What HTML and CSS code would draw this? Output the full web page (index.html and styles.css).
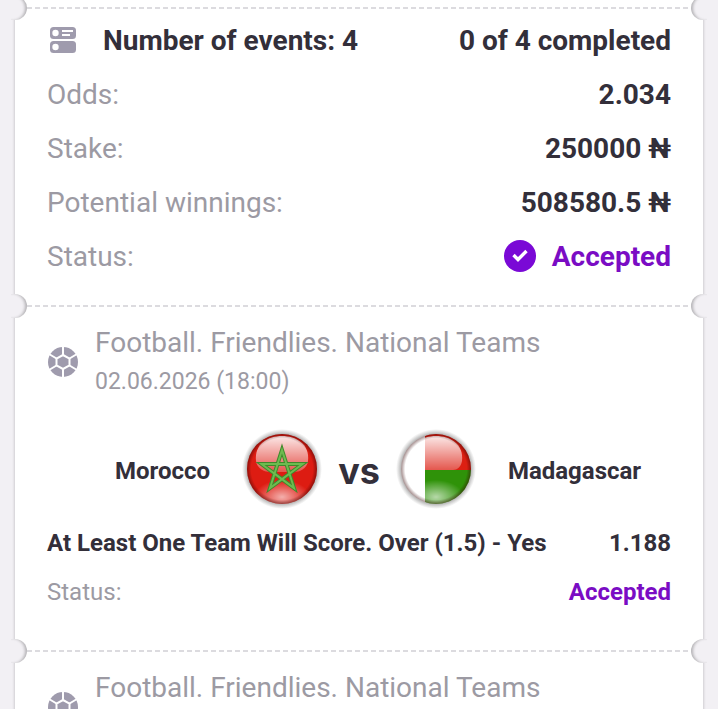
FILE: index.html
```
<!DOCTYPE html>
<html lang="en">
<head>
    <meta charset="UTF-8">
    <meta name="viewport" content="width=device-width, initial-scale=1.0">
    <title>Bet slip</title>
    <link rel="stylesheet" href="styles.css">
</head>
<body>
    <!-- Shared icons -->
    <svg class="sprite" aria-hidden="true">
        <symbol id="ball" viewBox="0 0 32 32">
            <circle cx="16" cy="16" r="15" fill="#9f9bad"/>
            <g fill="none" stroke="#fff" stroke-width="2">
                <path d="M16 9l6.500 3.500v7L16 23l-6.500-3.500v-7z"/>
                <path d="M16 0v9M16 23v9M22.500 12.500L30 8M22.500 19.500L30 24M9.500 12.500L2 8M9.500 19.500L2 24"/>
            </g>
        </symbol>
    </svg>

    <main class="ticket">
        <div class="divider"></div>

        <section class="summary">
            <div class="row">
                <svg class="icon" viewBox="0 0 32 32" aria-hidden="true">
                    <rect x="3" y="3" width="26" height="12" rx="3.500" fill="#9f9bad"/>
                    <rect x="3" y="17" width="26" height="12" rx="3.500" fill="#9f9bad"/>
                    <circle cx="8.500" cy="9" r="3.200" fill="#fff"/>
                    <circle cx="8.500" cy="23" r="3.200" fill="#fff"/>
                    <path d="M15 7h11M15 11h8" stroke="#fff" stroke-width="2.200"/>
                </svg>
                <span class="count">Number of events: 4</span>
                <span class="value">0 of 4 completed</span>
            </div>
            <div class="row">
                <span class="name">Odds:</span>
                <span class="value">2.034</span>
            </div>
            <div class="row">
                <span class="name">Stake:</span>
                <span class="value">250000 ₦</span>
            </div>
            <div class="row">
                <span class="name">Potential winnings:</span>
                <span class="value">508580.5 ₦</span>
            </div>
            <div class="row">
                <span class="name">Status:</span>
                <span class="value status">
                    <svg class="check" viewBox="0 0 32 32" aria-hidden="true">
                        <circle cx="16" cy="16" r="16" fill="#7a09d6"/>
                        <path d="M9.500 15l4.500 4.500 8.500-8.500" fill="none" stroke="#fff" stroke-width="3.400"/>
                    </svg>
                    Accepted
                </span>
            </div>
        </section>

        <div class="divider"></div>

        <section class="event">
            <div class="event-head">
                <svg class="icon" aria-hidden="true"><use href="#ball"/></svg>
                <div>
                    <div class="league">Football. Friendlies. National Teams</div>
                    <div class="date">02.06.2026 (18:00)</div>
                </div>
            </div>

            <div class="teams">
                <span class="team home">Morocco</span>
                <svg class="flag" viewBox="0 0 80 80" role="img" aria-label="Morocco">
                    <defs>
                        <radialGradient id="shadow">
                            <stop offset="0.860" stop-color="#666" stop-opacity="0.550"/>
                            <stop offset="1" stop-color="#888" stop-opacity="0"/>
                        </radialGradient>
                        <radialGradient id="rim">
                            <stop offset="0.880" stop-color="#300" stop-opacity="0"/>
                            <stop offset="1" stop-color="#300" stop-opacity="0.450"/>
                        </radialGradient>
                        <linearGradient id="gloss" x1="0" y1="0" x2="0" y2="1">
                            <stop offset="0" stop-color="#fff" stop-opacity="0.900"/>
                            <stop offset="1" stop-color="#fff" stop-opacity="0.250"/>
                        </linearGradient>
                        <radialGradient id="glow">
                            <stop offset="0" stop-color="#fff" stop-opacity="0.650"/>
                            <stop offset="1" stop-color="#fff" stop-opacity="0"/>
                        </radialGradient>
                        <clipPath id="disc"><circle cx="40" cy="40" r="35"/></clipPath>
                    </defs>
                    <circle cx="40" cy="40" r="40" fill="url(#shadow)"/>
                    <g clip-path="url(#disc)">
                        <path d="M0 0h80v80H0z" fill="#dd1c12"/>
                        <ellipse cx="40" cy="68" rx="28" ry="17" fill="url(#glow)"/>
                        <path d="M14 32C12 15 26 7 40 7s28 8 26 25c-1 8-9 11-14 11H28c-5 0-13-3-14-11z" fill="url(#gloss)"/>
                        <path d="M40 21l12 38-32.500-24h41L28 59z" fill="none" stroke="#3f8a2b" stroke-width="4"/>
                        <path d="M40 21l12 38-32.500-24h41L28 59z" fill="none" stroke="#6dbb50" stroke-width="2"/>
                    </g>
                    <circle cx="40" cy="40" r="35" fill="url(#rim)"/>
                </svg>
                <span class="versus">vs</span>
                <svg class="flag" viewBox="0 0 80 80" role="img" aria-label="Madagascar">
                    <circle cx="40" cy="40" r="40" fill="url(#shadow)"/>
                    <g clip-path="url(#disc)">
                        <path d="M0 0h30v80H0z" fill="#fff"/>
                        <path d="M29 0h51v41H29z" fill="#dc1f12"/>
                        <path d="M29 41h51v39H29z" fill="#2f9209"/>
                        <ellipse cx="40" cy="68" rx="28" ry="17" fill="url(#glow)"/>
                        <path d="M14 32C12 15 26 7 40 7s28 8 26 25c-1 6-5 9-9 9H23c-4 0-8-3-9-9z" fill="url(#gloss)"/>
                    </g>
                    <circle cx="40" cy="40" r="35" fill="url(#rim)"/>
                </svg>
                <span class="team">Madagascar</span>
            </div>

            <div class="market">
                <span>At Least One Team Will Score. Over (1.5) - Yes</span>
                <span>1.188</span>
            </div>
            <div class="event-status">
                <span class="name">Status:</span>
                <span class="status">Accepted</span>
            </div>
        </section>

        <div class="divider"></div>

        <section class="event">
            <div class="event-head">
                <svg class="icon" aria-hidden="true"><use href="#ball"/></svg>
                <div>
                    <div class="league">Football. Friendlies. National Teams</div>
                    <div class="date">02.06.2026 (18:00)</div>
                </div>
            </div>
        </section>
    </main>
</body>
</html>
```
FILE: styles.css
```
* {
    box-sizing: border-box;
}
body {
    height: 100vh;
    margin: 0;
    padding: 0 15px;
    overflow: hidden;
    background-color: #f2f0f4;
    font-family: Roboto, "Liberation Sans", sans-serif;
    font-size: 28px;
    color: #332f3a;
}
.sprite {
    position: absolute;
    width: 0;
    height: 0;
}
.ticket {
    padding-top: 7px;
    background-color: white;
    box-shadow: 0 0 3px rgba(0, 0, 0, 0.25);
}
.divider {
    position: relative;
    height: 2px;
    margin: 0 12px;
    background: repeating-linear-gradient(to right, #dcdbdf 0 5px, transparent 5px 8px);
}
/* round notches on both edges */
.divider::before,
.divider::after {
    content: "";
    position: absolute;
    top: -11px;
    width: 16px;
    height: 24px;
    background-color: #f2f0f4;
}
.divider::before {
    left: -16px;
    border-radius: 0 12px 12px 0;
    box-shadow: inset -3px 0 3px -1px rgba(0, 0, 0, 0.25);
}
.divider::after {
    right: -16px;
    border-radius: 12px 0 0 12px;
    box-shadow: inset 3px 0 3px -1px rgba(0, 0, 0, 0.25);
}
.summary {
    padding: 4px 32px 22px;
}
.row {
    display: flex;
    align-items: center;
    height: 54px;
}
.icon {
    flex: none;
    width: 32px;
    height: 32px;
}
.count {
    margin-left: 24px;
    font-weight: 700;
}
.name {
    color: #9c9aa3;
}
.value {
    margin-left: auto;
    font-weight: 700;
}
.status {
    display: flex;
    align-items: center;
    gap: 16px;
    font-weight: 700;
    color: #7a0cc4;
}
.check {
    width: 32px;
    height: 32px;
}
.event {
    padding: 16px 32px 33px;
}
.event-head {
    display: flex;
    align-items: center;
    gap: 16px;
    color: #9c9aa3;
}
.league {
    line-height: 40px;
}
.date {
    font-size: 23px;
    line-height: 38px;
}
.teams {
    display: grid;
    grid-template-columns: 1fr auto auto auto 1fr;
    align-items: center;
    margin-top: 28px;
    font-size: 24px;
    font-weight: 700;
}
.team {
    padding: 4px 0 0 32px;
}
.home {
    padding: 4px 32px 0 0;
    text-align: right;
}
.flag {
    width: 80px;
    height: 80px;
}
.versus {
    padding: 4px 16px 0;
    font-family: Inter, sans-serif;
    font-size: 36px;
}
.market,
.event-status {
    display: flex;
    justify-content: space-between;
    font-size: 24px;
    line-height: 49px;
}
.market {
    margin-top: 10px;
    font-weight: 700;
}
```
